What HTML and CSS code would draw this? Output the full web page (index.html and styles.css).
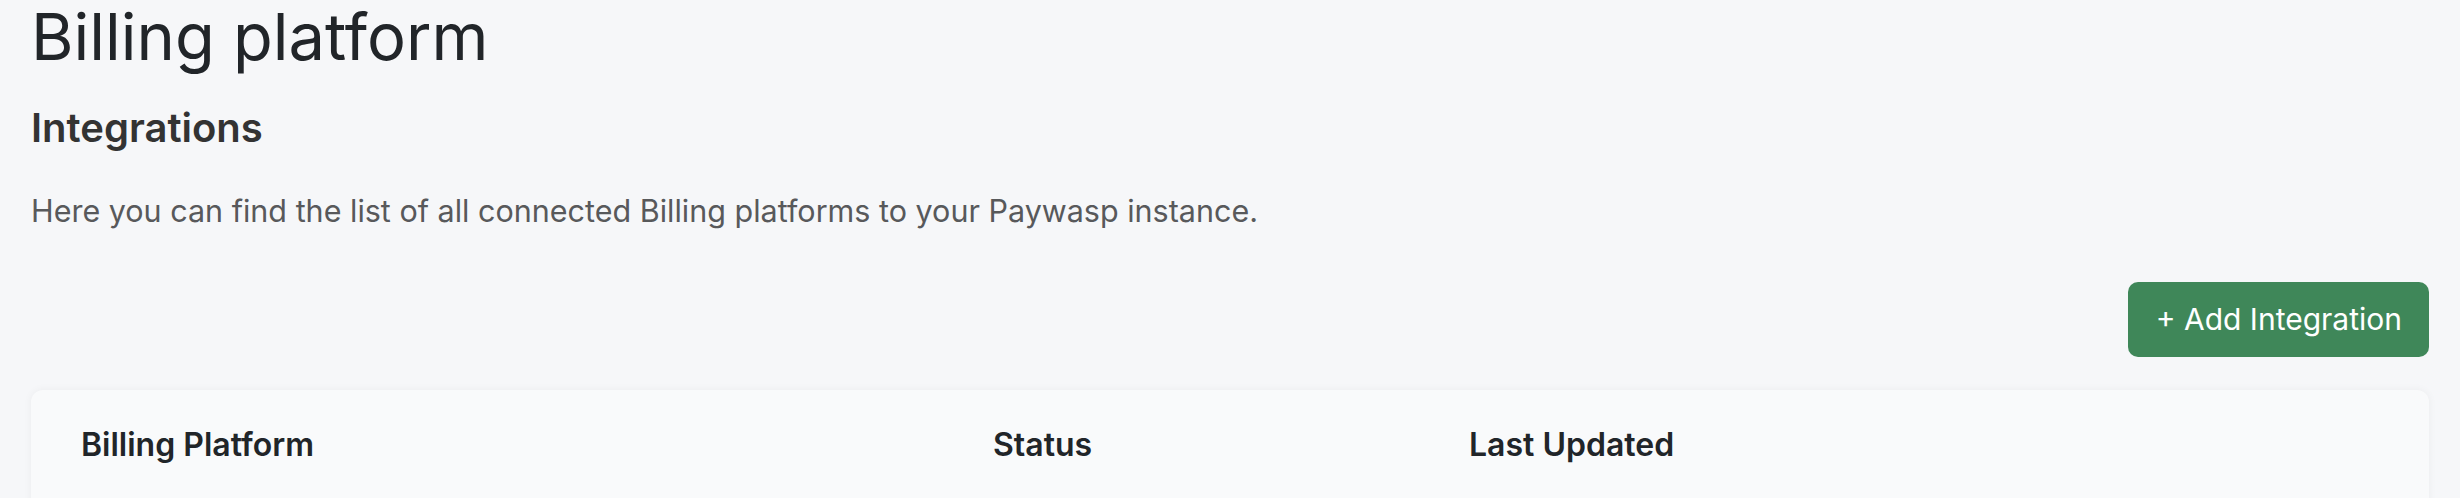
FILE: index.html
```html
<!DOCTYPE html>
<html>
	<head>
		<meta charset="UTF-8">
		<title>Billing platform</title>
		<link rel="stylesheet" href="styles.css">
	</head>
	<body>
		<div class="page">
			<h1 class="title">Billing platform</h1>
			<h3 class="subtitle">Integrations</h3>
			<p class="desc">Here you can find the list of all connected Billing platforms to your Paywasp instance.</p>
			<div class="actions">
				<button class="btn">+ Add Integration</button>
			</div>
			<div class="card">
				<div class="thead">
					<div class="th">Billing Platform</div>
					<div class="th">Status</div>
					<div class="th">Last Updated</div>
				</div>
			</div>
		</div>
	</body>
</html>
```

FILE: styles.css
```css
*{
	margin: 0;
	padding: 0;
	box-sizing: border-box;
}
html,body{
	height: 498px;
	overflow: hidden;
}
body{
	background: #f6f7f9;
	font-family: Inter, "Noto Sans", sans-serif;
	color: #212529;
}
.page{
	padding: 0 31px;
}
.title{
	font-size: 65px;
	font-weight: 400;
	line-height: 1.2;
	margin-top: -2px;
}
.subtitle{
	font-size: 40px;
	font-weight: 600;
	line-height: 1.2;
	color: #333;
	margin-top: 28px;
}
.desc{
	font-size: 30.5px;
	line-height: 1.5;
	color: #58595b;
	margin-top: 36px;
}
.actions{
	display: flex;
	justify-content: flex-end;
	margin-top: 48px;
}
.btn{
	background: #3f8759;
	color: #fff;
	border: none;
	border-radius: 10px;
	font-family: inherit;
	font-size: 30px;
	line-height: 47px;
	padding: 14px 27px 14px 28px;
	white-space: nowrap;
}
.card{
	margin-top: 33px;
	background: #f9fafb;
	border-radius: 12px;
	box-shadow: 0 0 8px rgba(0,0,0,0.05);
	height: 160px;
}
.thead{
	display: grid;
	grid-template-columns: 912px 476px 1fr;
	padding: 33px 50px 0;
}
.th{
	font-size: 32px;
	font-weight: 600;
	line-height: 1.4;
	color: #212529;
}
```
